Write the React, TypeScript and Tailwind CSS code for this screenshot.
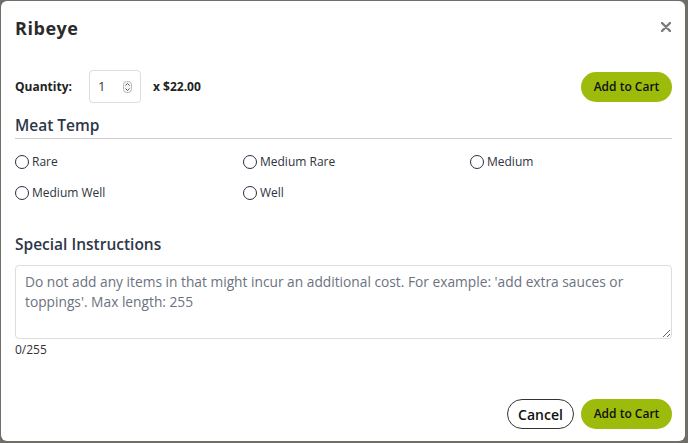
import type { ReactElement } from "react";

const temps = ["Rare", "Medium Rare", "Medium", "Medium Well", "Well"];

function Radio({ label }: { label: string }): ReactElement {
  return (
    <label className="flex h-[31px] items-center gap-[3px] text-[12px] text-[#2d3340]">
      <span className="h-[14px] w-[14px] rounded-full border-[1.7px] border-[#2b3040] bg-white" />
      {label}
    </label>
  );
}

function CartButton(): ReactElement {
  return (
    <button
      type="button"
      className="h-[30px] w-[91px] rounded-full bg-[#9cbb0b] text-[12px] font-semibold text-[#111]"
    >
      Add to Cart
    </button>
  );
}

export default function App(): ReactElement {
  return (
    <div
      className="h-[443px] w-[688px] overflow-hidden bg-[#6f6e68] pb-[2px] pl-[1px] pr-[3px] pt-[1px]"
      style={{ fontFamily: '"Open Sans", sans-serif' }}
    >
      <div className="flex h-full flex-col rounded-md bg-white pl-[14px] pr-[13px]">
        <div className="flex items-center justify-between pt-[14px]">
          <h1 className="text-[18px] font-bold tracking-[0.03em] text-[#2b2b2b]">
            Ribeye
          </h1>
          <svg
            width="10"
            height="10"
            viewBox="0 0 10 10"
            className="mr-[1px] mt-[-4px]"
            aria-label="Close"
          >
            <path
              d="M1 1L9 9M9 1L1 9"
              stroke="#7a7a7a"
              strokeWidth="2.4"
              strokeLinecap="round"
            />
          </svg>
        </div>

        <div className="mt-[28px] flex items-center justify-between">
          <div className="flex items-center">
            <span className="w-[74px] text-[12px] font-bold text-[#222]">
              Quantity:
            </span>
            <div className="flex h-[33px] w-[52px] items-center justify-between rounded-[4px] border border-[#ddd] pl-[8px] pr-[8px]">
              <span className="text-[13px] text-[#333]">1</span>
              <svg width="9" height="12" viewBox="0 0 9 12" aria-hidden="true">
                <rect
                  x="0.5"
                  y="0.5"
                  width="8"
                  height="11"
                  rx="3"
                  fill="#f4f4f4"
                  stroke="#bbb"
                />
                <path
                  d="M2.5 4.5L4.5 2.5L6.5 4.5M2.5 7.5L4.5 9.5L6.5 7.5"
                  fill="none"
                  stroke="#555"
                  strokeWidth="1"
                />
              </svg>
            </div>
            <span className="ml-[12px] text-[12px] font-bold text-[#222]">
              x $22.00
            </span>
          </div>
          <CartButton />
        </div>

        <h2 className="mt-[11px] text-[15.5px] font-semibold text-[#2d3748]">
          Meat Temp
        </h2>
        <div className="mt-[1px] border-b border-[#ccc]" />
        <div className="mt-[7px] grid grid-cols-[228px_227px_1fr]">
          {temps.map((t) => (
            <Radio key={t} label={t} />
          ))}
        </div>

        <h2 className="mt-[25px] text-[15.5px] font-semibold text-[#2d3748]">
          Special Instructions
        </h2>
        <textarea
          className="mt-[8px] h-[74px] w-full resize-y rounded-[4px] border border-[#ddd] px-[9px] pt-[6px] text-[13.75px] leading-[20px] text-[#333] outline-none placeholder:text-[#6b7280]"
          placeholder="Do not add any items in that might incur an additional cost. For example: 'add extra sauces or toppings'. Max length: 255"
        />
        <div className="mt-[2px] text-[12px] text-[#333]">0/255</div>

        <div className="mt-auto mb-[12px] flex justify-end gap-[7px]">
          <button
            type="button"
            className="h-[30px] w-[67px] rounded-full border border-[#333] bg-white text-[14px] font-semibold text-[#111]"
          >
            Cancel
          </button>
          <CartButton />
        </div>
      </div>
    </div>
  );
}
